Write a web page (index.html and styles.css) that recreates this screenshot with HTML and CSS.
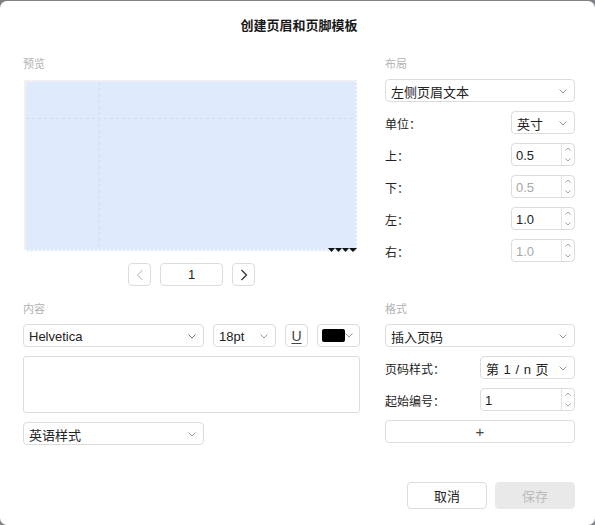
FILE: index.html
```html
<!DOCTYPE html>
<html lang="zh-CN">
<head>
  <meta charset="UTF-8">
  <meta name="viewport" content="width=device-width, initial-scale=1.0">
  <title>创建页眉和页脚模板</title>
  <link rel="stylesheet" href="styles.css">
</head>
<body>
  <div class="dialog">
    <h1 class="title">创建页眉和页脚模板</h1>

    <div class="panels">
      <!-- 预览 -->
      <section class="panel">
        <div class="section-label">预览</div>
        <div class="preview">
          <svg width="335" height="172" viewBox="0 0 335 172">
            <defs>
              <pattern id="zz-right" width="4" height="4" patternUnits="userSpaceOnUse" x="330" y="0">
                <polygon points="4,0 1.5,2 4,4" fill="#fff"/>
              </pattern>
              <pattern id="zz-bottom" width="4" height="4" patternUnits="userSpaceOnUse" x="0" y="168">
                <polygon points="0,4 2,1.5 4,4" fill="#fff"/>
              </pattern>
            </defs>
            <rect x="0" y="0" width="333" height="2" fill="#f0f0f0"/>
            <rect x="0" y="0" width="2" height="170" fill="#f0f0f0"/>
            <rect x="2" y="2" width="332" height="170" fill="#dfeafd"/>
            <line x1="75" y1="2" x2="75" y2="168" stroke="#cfdaee" stroke-width="1" stroke-dasharray="3 3"/>
            <line x1="2" y1="38.5" x2="332" y2="38.5" stroke="#cfdaee" stroke-width="1" stroke-dasharray="3 3"/>
            <rect x="330" y="0" width="5" height="172" fill="url(#zz-right)"/>
            <rect x="0" y="168" width="335" height="4" fill="url(#zz-bottom)"/>
            <polygon points="304,168 311,168 307.5,172" fill="#111"/>
            <polygon points="311,168 318,168 314.5,172" fill="#111"/>
            <polygon points="318,168 325,168 321.5,172" fill="#111"/>
            <polygon points="325,168 333,168 329,172" fill="#111"/>
          </svg>
        </div>
        <div class="pager">
          <button class="square-btn disabled">
            <svg width="8" height="12" viewBox="0 0 8 12"><path d="M6.5 1 L1.5 6 L6.5 11" fill="none" stroke="#d0d0d0" stroke-width="1.2"/></svg>
          </button>
          <div class="page-input">1</div>
          <button class="square-btn">
            <svg width="8" height="12" viewBox="0 0 8 12"><path d="M1.5 1 L6.5 6 L1.5 11" fill="none" stroke="#333" stroke-width="1.3"/></svg>
          </button>
        </div>
      </section>

      <!-- 布局 -->
      <section class="panel">
        <div class="section-label">布局</div>
        <div class="select wide">
          <span>左侧页眉文本</span>
          <svg class="chev" width="8" height="5" viewBox="0 0 8 5"><path d="M0.5 0.5 L4 4 L7.5 0.5" fill="none" stroke="#999" stroke-width="1"/></svg>
        </div>
        <div class="field-row">
          <span class="field-label">单位：</span>
          <div class="select short">
            <span>英寸</span>
            <svg class="chev" width="8" height="5" viewBox="0 0 8 5"><path d="M0.5 0.5 L4 4 L7.5 0.5" fill="none" stroke="#999" stroke-width="1"/></svg>
          </div>
        </div>
        <div class="field-row">
          <span class="field-label">上：</span>
          <div class="spinner short">
            <span class="value">0.5</span>
            <span class="stepper">
              <svg width="6" height="4" viewBox="0 0 6 4"><path d="M0.5 3.5 L3 1 L5.5 3.5" fill="none" stroke="#999" stroke-width="0.9"/></svg>
              <svg width="6" height="4" viewBox="0 0 6 4"><path d="M0.5 0.5 L3 3 L5.5 0.5" fill="none" stroke="#999" stroke-width="0.9"/></svg>
            </span>
          </div>
        </div>
        <div class="field-row">
          <span class="field-label">下：</span>
          <div class="spinner short off">
            <span class="value">0.5</span>
            <span class="stepper">
              <svg width="6" height="4" viewBox="0 0 6 4"><path d="M0.5 3.5 L3 1 L5.5 3.5" fill="none" stroke="#999" stroke-width="0.9"/></svg>
              <svg width="6" height="4" viewBox="0 0 6 4"><path d="M0.5 0.5 L3 3 L5.5 0.5" fill="none" stroke="#999" stroke-width="0.9"/></svg>
            </span>
          </div>
        </div>
        <div class="field-row">
          <span class="field-label">左：</span>
          <div class="spinner short">
            <span class="value">1.0</span>
            <span class="stepper">
              <svg width="6" height="4" viewBox="0 0 6 4"><path d="M0.5 3.5 L3 1 L5.5 3.5" fill="none" stroke="#999" stroke-width="0.9"/></svg>
              <svg width="6" height="4" viewBox="0 0 6 4"><path d="M0.5 0.5 L3 3 L5.5 0.5" fill="none" stroke="#999" stroke-width="0.9"/></svg>
            </span>
          </div>
        </div>
        <div class="field-row">
          <span class="field-label">右：</span>
          <div class="spinner short off">
            <span class="value">1.0</span>
            <span class="stepper">
              <svg width="6" height="4" viewBox="0 0 6 4"><path d="M0.5 3.5 L3 1 L5.5 3.5" fill="none" stroke="#999" stroke-width="0.9"/></svg>
              <svg width="6" height="4" viewBox="0 0 6 4"><path d="M0.5 0.5 L3 3 L5.5 0.5" fill="none" stroke="#999" stroke-width="0.9"/></svg>
            </span>
          </div>
        </div>
      </section>

      <!-- 内容 -->
      <section class="panel">
        <div class="section-label">内容</div>
        <div class="font-row">
          <div class="select font-name">
            <span>Helvetica</span>
            <svg class="chev" width="8" height="5" viewBox="0 0 8 5"><path d="M0.5 0.5 L4 4 L7.5 0.5" fill="none" stroke="#777" stroke-width="1"/></svg>
          </div>
          <div class="select font-size">
            <span>18pt</span>
            <svg class="chev" width="8" height="5" viewBox="0 0 8 5"><path d="M0.5 0.5 L4 4 L7.5 0.5" fill="none" stroke="#999" stroke-width="1"/></svg>
          </div>
          <button class="square-btn underline-btn"><span>U</span></button>
          <div class="select color-pick">
            <span class="swatch"></span>
            <svg class="chev" width="8" height="5" viewBox="0 0 8 5"><path d="M0.5 0.5 L4 4 L7.5 0.5" fill="none" stroke="#999" stroke-width="1"/></svg>
          </div>
        </div>
        <div class="text-box"></div>
        <div class="select font-name gap-top">
          <span>英语样式</span>
          <svg class="chev" width="8" height="5" viewBox="0 0 8 5"><path d="M0.5 0.5 L4 4 L7.5 0.5" fill="none" stroke="#999" stroke-width="1"/></svg>
        </div>
      </section>

      <!-- 格式 -->
      <section class="panel">
        <div class="section-label">格式</div>
        <div class="select wide">
          <span>插入页码</span>
          <svg class="chev" width="8" height="5" viewBox="0 0 8 5"><path d="M0.5 0.5 L4 4 L7.5 0.5" fill="none" stroke="#999" stroke-width="1"/></svg>
        </div>
        <div class="field-row">
          <span class="field-label">页码样式：</span>
          <div class="select medium">
            <span class="spaced">第 1 / n 页</span>
            <svg class="chev" width="8" height="5" viewBox="0 0 8 5"><path d="M0.5 0.5 L4 4 L7.5 0.5" fill="none" stroke="#999" stroke-width="1"/></svg>
          </div>
        </div>
        <div class="field-row">
          <span class="field-label">起始编号：</span>
          <div class="spinner medium">
            <span class="value">1</span>
            <span class="stepper">
              <svg width="6" height="4" viewBox="0 0 6 4"><path d="M0.5 3.5 L3 1 L5.5 3.5" fill="none" stroke="#999" stroke-width="0.9"/></svg>
              <svg width="6" height="4" viewBox="0 0 6 4"><path d="M0.5 0.5 L3 3 L5.5 0.5" fill="none" stroke="#999" stroke-width="0.9"/></svg>
            </span>
          </div>
        </div>
        <button class="add-btn">+</button>
      </section>
    </div>

    <div class="footer">
      <button class="btn">取消</button>
      <button class="btn btn-disabled">保存</button>
    </div>
  </div>
</body>
</html>
```

FILE: styles.css
```css
html {
  background-color: #7f8187;
}

body {
  margin: 0;
  padding-top: 1px;
  font-family: "Liberation Sans", "Noto Sans CJK SC", sans-serif;
  font-size: 13px;
  color: #222;
}

.dialog {
  background-color: #fff;
  border-radius: 7px;
  height: 524px;
  box-sizing: border-box;
  padding: 0 20px 0 23px;
}

.title {
  margin: 0;
  padding-top: 16px;
  font-size: 13px;
  line-height: 18px;
  font-weight: bold;
  text-align: center;
  color: #1a1a1a;
}

.panels {
  margin-top: 21px;
  display: grid;
  grid-template-columns: 337px 190px;
  column-gap: 25px;
  row-gap: 15px;
  align-items: start;
}

.panel {
  display: flex;
  flex-direction: column;
}

.section-label {
  font-size: 11px;
  line-height: 16px;
  color: #b3b3b3;
  margin-bottom: 7px;
}

.preview {
  height: 172px;
  margin: 1px 0 0 1px;
}

.preview svg {
  display: block;
}

.pager {
  margin-top: 11px;
  display: flex;
  justify-content: center;
  gap: 9px;
}

.square-btn {
  width: 23px;
  height: 23px;
  padding: 0;
  border: 1px solid #dcdcdc;
  border-radius: 4px;
  background: #fff;
  display: flex;
  align-items: center;
  justify-content: center;
  font-family: inherit;
}

.page-input {
  width: 63px;
  height: 23px;
  box-sizing: border-box;
  border: 1px solid #dcdcdc;
  border-radius: 4px;
  text-align: center;
  line-height: 22px;
  font-size: 13px;
}

.select {
  height: 23px;
  box-sizing: border-box;
  border: 1px solid #dcdcdc;
  border-radius: 4px;
  display: flex;
  align-items: center;
  justify-content: space-between;
  padding: 1px 7px 0 5px;
  font-size: 13px;
  background: #fff;
}

.chev {
  flex: none;
}

.wide {
  width: 190px;
}

.short {
  width: 64px;
}

.medium {
  width: 95px;
}

.field-row {
  margin-top: 9px;
  display: flex;
  align-items: center;
  justify-content: space-between;
  height: 23px;
}

.field-label {
  font-size: 12px;
  color: #222;
  padding-top: 1px;
}

.spinner {
  height: 23px;
  box-sizing: border-box;
  border: 1px solid #dcdcdc;
  border-radius: 4px;
  display: flex;
  align-items: stretch;
}

.spinner .value {
  flex: 1;
  padding-left: 4px;
  line-height: 23px;
  font-size: 13px;
}

.spinner.off .value {
  color: #a8a8a8;
}

.stepper {
  width: 12px;
  border-left: 1px solid #e2e2e2;
  display: flex;
  flex-direction: column;
  align-items: center;
  justify-content: space-between;
  padding: 3px 0;
}

.stepper svg {
  display: block;
}

.font-row {
  display: flex;
  gap: 9px;
}

.font-name {
  width: 181px;
}

.font-size {
  width: 63px;
}

.underline-btn span {
  text-decoration: underline;
  font-size: 14px;
  color: #444;
  text-underline-offset: 2px;
}

.color-pick {
  width: 43px;
  padding: 0 6px 0 4px;
}

.swatch {
  width: 24px;
  height: 13px;
  background: #000;
  border-radius: 2px;
}

.text-box {
  margin-top: 9px;
  width: 337px;
  height: 57px;
  box-sizing: border-box;
  border: 1px solid #dcdcdc;
  border-radius: 3px;
}

.gap-top {
  margin-top: 9px;
}

.spaced {
  word-spacing: 1px;
}

.add-btn {
  margin-top: 9px;
  width: 190px;
  height: 23px;
  border: 1px solid #dcdcdc;
  border-radius: 4px;
  background: #fff;
  font-size: 15px;
  color: #444;
  padding: 0;
  line-height: 20px;
}

.footer {
  margin-top: 37px;
  display: flex;
  justify-content: flex-end;
  gap: 8px;
}

.btn {
  width: 80px;
  height: 27px;
  border: 1px solid #dcdcdc;
  border-radius: 4px;
  background: #fff;
  font-family: inherit;
  font-size: 13px;
  color: #222;
}

.btn-disabled {
  background: #e9e9e9;
  border-color: #e9e9e9;
  color: #bcbcbc;
}
```
